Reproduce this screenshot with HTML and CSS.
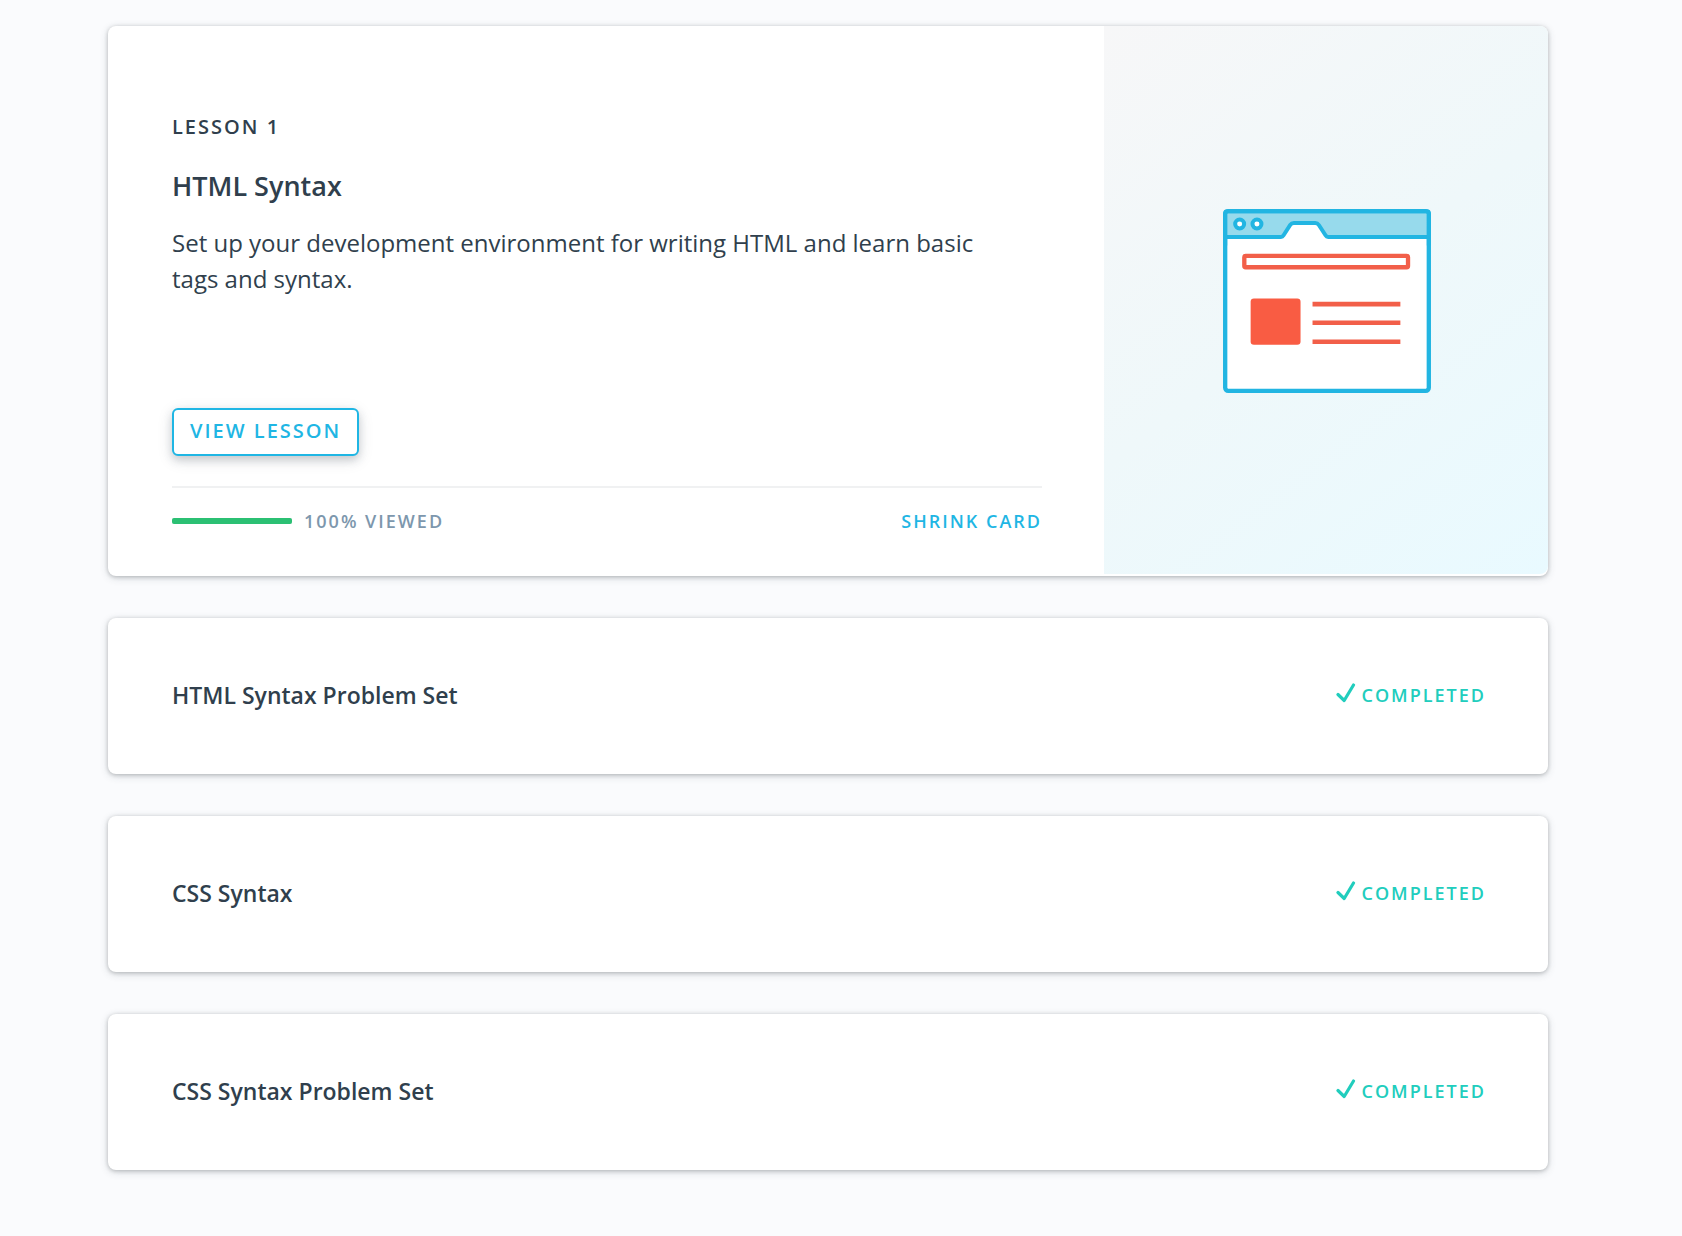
FILE: index.html
```html
<!DOCTYPE html>
<html lang="en">
<head>
<meta charset="utf-8">
<meta name="viewport" content="width=device-width, initial-scale=1">
<title>HTML Syntax</title>
<link rel="stylesheet" href="styles.css">
</head>
<body>
<svg class="sprite" aria-hidden="true">
  <symbol id="check" viewBox="0 0 20 20"><path d="M2 11.500 8.200 17.500 17.500 2" fill="none" stroke="currentColor" stroke-width="3.200" stroke-linecap="round" stroke-linejoin="round"/></symbol>
</svg>
<main class="lessons">
  <article class="card lesson">
    <div class="lesson-body">
      <p class="eyebrow">LESSON 1</p>
      <h1 class="lesson-title">HTML Syntax</h1>
      <p class="lesson-text">Set up your development environment for writing HTML and learn basic tags and syntax.</p>
      <button class="view-button" type="button">VIEW LESSON</button>
      <footer class="lesson-footer">
        <div class="progress"><div class="progress-fill" style="width: 100%"></div></div>
        <span class="viewed">100% VIEWED</span>
        <button class="shrink-button" type="button">SHRINK CARD</button>
      </footer>
    </div>
    <div class="lesson-media">
      <svg class="illustration" viewBox="68 58 625 553" aria-hidden="true">
        <rect x="74" y="64" width="613" height="541" rx="8" fill="#fff"/>
        <path d="M74 142V72q0-7 7-7h599q7 0 7 7v70H384q-5 0-8-5l-20-31q-4-6-11-6h-64q-7 0-11 6l-20 31q-3 5-8 5z" fill="#97daec" stroke="#22b5e2" stroke-width="12" stroke-linejoin="round"/>
        <rect x="74.500" y="64.500" width="612" height="540" rx="9" fill="none" stroke="#22b5e2" stroke-width="13"/>
        <path d="M74 138v30M687 138v30" stroke="#22b5e2" stroke-width="13"/>
        <g fill="#fff" stroke="#22b5e2" stroke-width="12"><circle cx="118" cy="103" r="13.500"/><circle cx="170" cy="103" r="13.500"/></g>
        <rect x="132" y="199" width="492" height="34" rx="4" fill="#fff" stroke="#f25f49" stroke-width="13"/>
        <rect x="151" y="327" width="150" height="139" rx="10" fill="#f95c43"/>
        <path d="M337 344h264M337 400h264M337 457h264" stroke="#f25f49" stroke-width="14"/>
      </svg>
    </div>
  </article>
  <article class="card item">
    <h2 class="item-title">HTML Syntax Problem Set</h2>
    <span class="status"><svg class="check" aria-hidden="true"><use href="#check"/></svg>COMPLETED</span>
  </article>
  <article class="card item">
    <h2 class="item-title">CSS Syntax</h2>
    <span class="status"><svg class="check" aria-hidden="true"><use href="#check"/></svg>COMPLETED</span>
  </article>
  <article class="card item">
    <h2 class="item-title">CSS Syntax Problem Set</h2>
    <span class="status"><svg class="check" aria-hidden="true"><use href="#check"/></svg>COMPLETED</span>
  </article>
</main>
</body>
</html>
```

FILE: styles.css
```css
* {
  box-sizing: border-box;
}

body {
  margin: 0;
  background: #fafbfd;
  color: #303f4d;
  font-family: "Open Sans", "Noto Sans", sans-serif;
}

h1,
h2,
p {
  margin: 0;
}

button {
  font: inherit;
  background: none;
  border: 0;
  cursor: pointer;
}

.sprite {
  display: none;
}

.lessons {
  display: flex;
  flex-direction: column;
  gap: 42px;
  padding: 26px 134px 66px 108px;
}

.card {
  display: flex;
  background: #fff;
  border-radius: 8px;
  box-shadow: 0 2px 8px 0 rgba(46, 61, 73, 0.16), 0 1px 4px 0 rgba(0, 0, 0, 0.22);
}

.lesson {
  min-height: 550px;
}

.lesson-body {
  flex: 1;
  display: flex;
  flex-direction: column;
  align-items: flex-start;
  padding: 86px 62px 41px 64px;
}

.eyebrow {
  margin-bottom: 24px;
  font-size: 20px;
  font-weight: 600;
  line-height: 30px;
  letter-spacing: 2px;
}

.lesson-title {
  margin-bottom: 19px;
  font-size: 27px;
  font-weight: 600;
  line-height: 40px;
}

.lesson-text {
  margin-bottom: 40px;
  padding-right: 40px;
  font-size: 24px;
  line-height: 36px;
}

.view-button {
  height: 48px;
  margin-top: auto;
  padding: 0 16px 2px;
  border: 2px solid #1fb6e4;
  border-radius: 6px;
  background: #fff;
  box-shadow: 0 4px 16px 0 rgba(46, 61, 73, 0.12), 0 4px 8px 0 rgba(46, 61, 73, 0.2);
  color: #1fb6e4;
  font-size: 20px;
  font-weight: 600;
  line-height: 30px;
  letter-spacing: 2px;
}

.lesson-footer {
  display: flex;
  align-items: center;
  align-self: stretch;
  margin-top: 30px;
  padding-top: 19px;
  border-top: 2px solid #f0f1f2;
  font-size: 18px;
  font-weight: 600;
  line-height: 28px;
  letter-spacing: 2px;
}

.progress {
  width: 120px;
  height: 6px;
  margin-right: 12px;
  border-radius: 2px;
  background: #dbe2e8;
}

.progress-fill {
  height: 100%;
  border-radius: 2px;
  background: #2bc073;
}

.viewed {
  color: #7d97ad;
}

.shrink-button {
  margin-left: auto;
  padding: 0;
  color: #1fb6e4;
  letter-spacing: 2px;
}

.lesson-media {
  flex: 0 0 444px;
  display: flex;
  align-items: center;
  justify-content: center;
  margin-bottom: 2px;
  padding: 2px 0 0 2px;
  border-radius: 0 8px 8px 0;
  background: linear-gradient(143deg, #f7f7f8 0%, #eff8fa 50%, #e9faff 100%);
}

.illustration {
  width: 208px;
  height: 184px;
}

.item {
  align-items: center;
  justify-content: space-between;
  min-height: 156px;
  padding: 32px 62px 34px 64px;
}

.item-title {
  font-size: 23px;
  font-weight: 600;
  line-height: 36px;
}

.status {
  display: flex;
  align-items: center;
  gap: 6px;
  color: #21cdbd;
  font-size: 18px;
  font-weight: 600;
  line-height: 28px;
  letter-spacing: 2px;
}

.check {
  width: 20px;
  height: 20px;
  margin-bottom: 4px;
}
```
